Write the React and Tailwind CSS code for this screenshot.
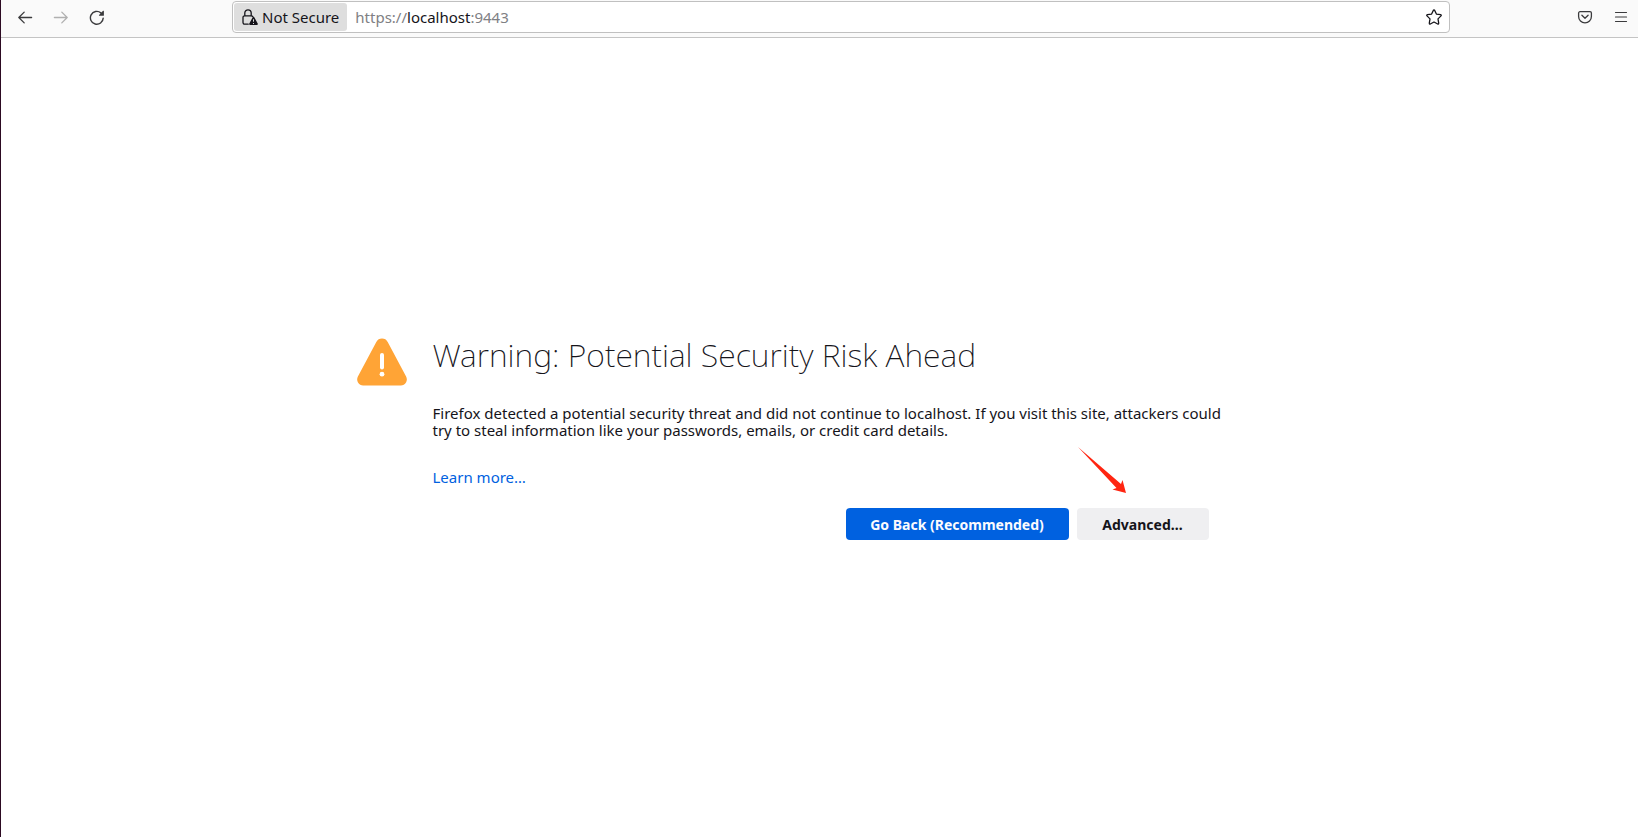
import React from 'react';

const BackIcon = () => (
  <svg className="w-4 h-4" viewBox="0 0 16 16" fill="none" stroke="currentColor" strokeWidth="1.3" strokeLinecap="round" strokeLinejoin="round">
    <path d="M14.6 8.500H1.8M7.2 3.100L1.8 8.500l5.4 5.4" />
  </svg>
);

const ForwardIcon = () => (
  <svg className="w-4 h-4" viewBox="0 0 16 16" fill="none" stroke="currentColor" strokeWidth="1.3" strokeLinecap="round" strokeLinejoin="round">
    <path d="M1.4 8.500h12.8M8.8 3.100L14.2 8.500l-5.4 5.4" />
  </svg>
);

const ReloadIcon = () => (
  <svg className="w-4 h-4" viewBox="0 0 16 16" fill="none">
    <path d="M14.2 9.100A6.4 6.4 0 1 1 11.9 3.900" stroke="currentColor" strokeWidth="1.4" strokeLinecap="round" />
    <path d="M14.9 2.200v4.1a.5.5 0 0 1-.5.5h-4a.5.5 0 0 1-.35-.85l4-4.100a.5.5 0 0 1 .85.35z" fill="currentColor" />
  </svg>
);

const LockWarningIcon = () => (
  <svg className="w-4 h-4" viewBox="0 0 16 16" fill="none">
    <path d="M6.2 15.2H2.6A1.6 1.6 0 0 1 1 13.6V8.4A1.6 1.6 0 0 1 2.6 6.8h6.8q1 0 1.4.8M2.8 6.8V4a3.2 3.2 0 0 1 6.4 0v2.8" stroke="currentColor" strokeWidth="1.3" strokeLinecap="round" />
    <path d="M10.7 8.3a.9.9 0 0 1 1.6 0l3.4 6.3a.9.9 0 0 1-.8 1.4H8.1a.9.9 0 0 1-.8-1.4z" fill="currentColor" />
    <path d="M11.5 10.3v2.4M11.5 14v1" stroke="#e0e0e0" strokeWidth="1" />
  </svg>
);

const StarIcon = () => (
  <svg className="w-4 h-4" viewBox="0 0 16 16" fill="none" stroke="currentColor" strokeWidth="1.3" strokeLinejoin="round">
    <path d="M7.3 1.400a.8.8 0 0 1 1.400 0l1.700 3.700 4.200.6a.7.7 0 0 1 .4 1.200l-3 3 .7 4.300a.7.7 0 0 1-1 .8L8 13l-3.700 2a.7.7 0 0 1-1-.8L4 9.900l-3-3a.7.7 0 0 1 .4-1.200l4.200-.6z" />
  </svg>
);

const PocketIcon = () => (
  <svg className="w-4 h-4" viewBox="0 0 16 16" fill="none" stroke="currentColor" strokeWidth="1.3" strokeLinecap="round" strokeLinejoin="round">
    <path d="M3 2.7h10a1.4 1.4 0 0 1 1.4 1.4v3.3a6.4 6.4 0 0 1-12.8 0V4.1A1.4 1.4 0 0 1 3 2.7z" />
    <path d="M4.9 6.3L8 9.3l3.1-3" />
  </svg>
);

const MenuIcon = () => (
  <svg className="w-4 h-4" viewBox="0 0 16 16" fill="none" stroke="currentColor" strokeWidth="1.2" strokeLinecap="round">
    <path d="M2.5 3.5h11M2.5 8h11M2.5 12.5h11" />
  </svg>
);

const WarningIcon = () => (
  <svg className="w-[50px] h-[50px] shrink-0" viewBox="0 0 50 50">
    <path d="M19.3 5a6.5 6.5 0 0 1 11.4 0l18.4 34.5a6 6 0 0 1-5.3 8.9H6.2a6 6 0 0 1-5.3-8.9z" fill="#ffa436" />
    <path d="M25 18v12.6" stroke="#fff" strokeWidth="4" strokeLinecap="round" />
    <circle cx="25" cy="37.2" r="2.4" fill="#fff" />
  </svg>
);

const Toolbar = () => (
  <header className="flex items-start h-[38px] pl-[6px] pr-px bg-[#fafafa] border-b border-[#c4c4c4] text-[#3b3b3d]">
    <nav className="flex">
      <button aria-label="Back" className="w-9 h-[34px] flex items-center justify-center"><BackIcon /></button>
      <button aria-label="Forward" disabled className="w-9 h-[34px] flex items-center justify-center text-[#b0b0b0]"><ForwardIcon /></button>
      <button aria-label="Reload" className="w-9 h-[34px] flex items-center justify-center"><ReloadIcon /></button>
    </nav>
    <div className="flex-1 flex items-center mt-px ml-[117px] mr-[119px] h-8 p-px bg-white border border-[#c0c0c0] rounded-[4px] text-[#15141a]">
      <button className="flex items-center gap-1 h-7 px-2 rounded-[3px] bg-[#dedede] text-[15px] whitespace-nowrap">
        <LockWarningIcon />
        Not Secure
      </button>
      <div className="flex-1 pl-2 text-[15px] text-[#808084]">
        https://<span className="text-[#15141a]">localhost</span>:9443
      </div>
      <button aria-label="Bookmark this page" className="px-[6px]"><StarIcon /></button>
    </div>
    <div className="flex gap-1">
      <button aria-label="Save to Pocket" className="w-8 h-[34px] flex items-center justify-center"><PocketIcon /></button>
      <button aria-label="Open menu" className="w-8 h-[34px] flex items-center justify-center"><MenuIcon /></button>
    </div>
  </header>
);

const App = () => {
  return (
    <div className="min-h-screen flex flex-col bg-white border-l border-[#2c0a22] font-['Noto_Sans','Open_Sans',sans-serif] text-[#15141a]">
      <Toolbar />
      <main className="flex-1 flex items-center justify-center pl-6 pr-[98px] pt-[2px]">
        <div className="flex items-start gap-[26px] w-full max-w-[852px]">
          <WarningIcon />
          <div className="flex-1">
            <h1 className="text-[32px] leading-9 font-extralight">Warning: Potential Security Risk Ahead</h1>
            <p className="mt-8 -mr-4 text-[15px] leading-[17px]">
              Firefox detected a potential security threat and did not continue to localhost. If you visit this site, attackers could try to steal information like your passwords, emails, or credit card details.
            </p>
            <p className="mt-[30px] text-[15px] leading-[17px]">
              <a href="#learn-more" className="text-[#0061e0]">Learn more…</a>
            </p>
            <div className="flex justify-end gap-2 mt-[22px] text-[14px] font-bold">
              <button className="min-w-[223px] h-8 px-4 rounded-[4px] bg-[#0061e0] text-[#fbfbfe]">Go Back (Recommended)</button>
              <div className="relative">
                <button className="min-w-[132px] h-8 px-4 rounded-[4px] bg-[#efeff1]">Advanced…</button>
                <svg className="absolute left-0 bottom-[46px] w-[50px] h-[48px]" viewBox="0 0 50 48" fill="#ff2511" aria-hidden="true">
                  <path d="M1 1L44 38 45.500 34 49 47 35.500 43.500 39.500 42z" />
                </svg>
              </div>
            </div>
          </div>
        </div>
      </main>
    </div>
  );
};

export default App;
